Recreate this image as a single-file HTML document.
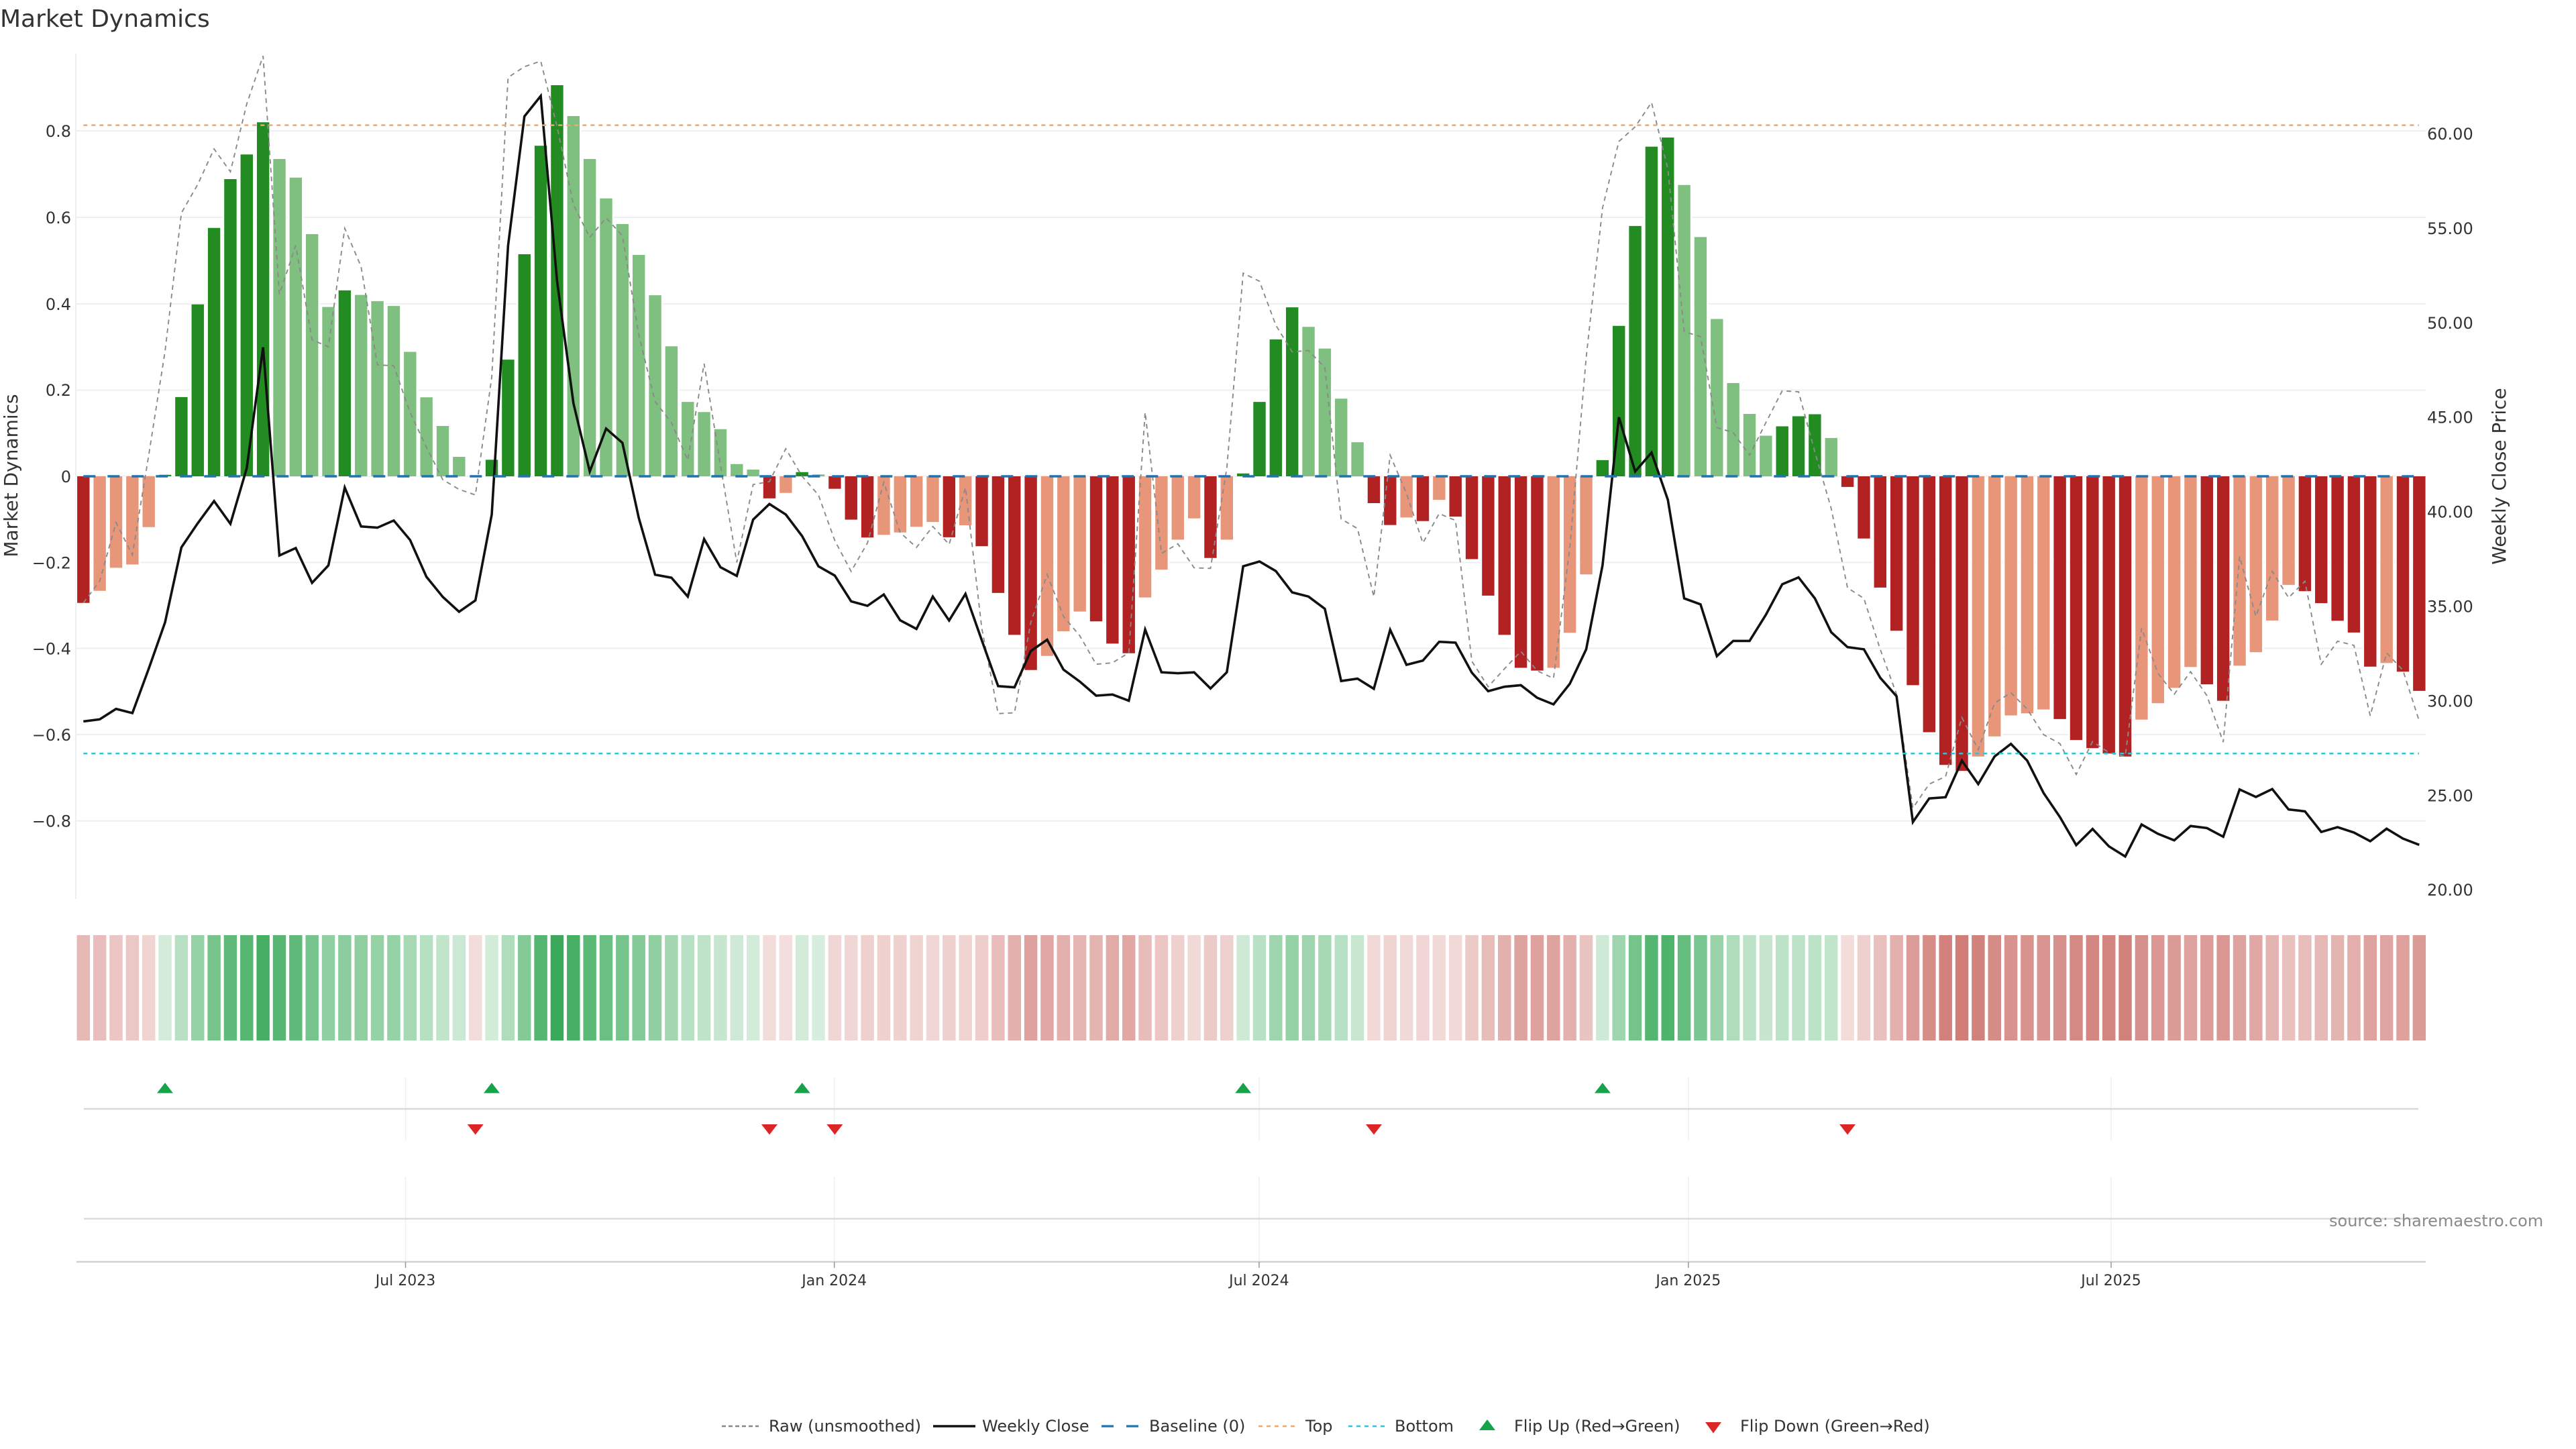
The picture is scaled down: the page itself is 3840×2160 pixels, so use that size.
<!DOCTYPE html>
<html><head><meta charset="utf-8"><title>Market Dynamics</title>
<style>html,body{margin:0;padding:0;background:#fff;width:3840px;height:2160px;overflow:hidden}svg{display:block}text{font-family:"DejaVu Sans","Liberation Sans",sans-serif;fill:#333}</style></head>
<body>
<svg width="3840" height="2160" viewBox="0 0 3840 2160" xmlns="http://www.w3.org/2000/svg">
<rect width="3840" height="2160" fill="#fff"/>
<text x="0" y="40" font-size="36">Market Dynamics</text>
<!-- grid -->
<g stroke="#eeeff3" stroke-width="2" fill="none">
<path d="M113 80V1340"/>
<path d="M113 195H3616M113 324H3616M113 453H3616M113 581.5H3616M113 710H3616M113 838.5H3616M113 966.5H3616M113 1095H3616M113 1223.7H3616"/>
</g>
<defs>
<path id="dg" d="M5 710V707.7M6 710V591.9M7 710V453.7M8 710V339.8M9 710V267M10 710V230.2M11 710V182.3M16 710V432.9M25 710V685.4M26 710V536.1M27 710V379M28 710V217.2M29 710V127M44 710V703.8M71 710V705.8M72 710V599.1M73 710V506M74 710V458.1M93 710V685.9M94 710V485.7M95 710V336.9M96 710V218.6M97 710V205M104 710V635.5M105 710V620.5M106 710V617.5"/>
<path id="lg" d="M12 710V237M13 710V264.7M14 710V349M15 710V457.6M17 710V439.6M18 710V448.9M19 710V456.1M20 710V524.5M21 710V592.3M22 710V635M23 710V681M30 710V173M31 710V237M32 710V295.7M33 710V334M34 710V380M35 710V440.1M36 710V516.2M37 710V599.1M38 710V614.2M39 710V639.8M40 710V691.7M41 710V700M45 710V707.2M75 710V487.2M76 710V519.6M77 710V594.3M78 710V659.2M98 710V275.8M99 710V353.4M100 710V475.5M101 710V571M102 710V617M103 710V649.5M107 710V652.9"/>
<path id="dr" d="M0 710V898.7M42 710V742.9M46 710V728.6M47 710V774.6M48 710V801.3M53 710V800.9M55 710V814.3M56 710V883.9M57 710V946.4M58 710V998.7M62 710V926.3M63 710V959.4M64 710V973.7M69 710V831.7M79 710V750M80 710V782.6M82 710V776.8M84 710V770.1M85 710V833.5M86 710V887.9M87 710V946.4M88 710V995.5M89 710V999.6M108 710V725.9M109 710V802.7M110 710V875.9M111 710V940.2M112 710V1021.4M113 710V1091.5M114 710V1140.2M115 710V1149.1M121 710V1071.9M122 710V1103.1M123 710V1115.2M124 710V1123.2M125 710V1127.7M130 710V1020.1M131 710V1044.6M136 710V881.3M137 710V899.1M138 710V925.4M139 710V942.9M140 710V993.8M142 710V1001.3M143 710V1029.9"/>
<path id="sa" d="M1 710V880.8M2 710V846.4M3 710V841.5M4 710V785.7M43 710V734.8M49 710V797.3M50 710V793.8M51 710V785.3M52 710V778.1M54 710V783M59 710V977.7M60 710V941M61 710V911.6M65 710V890.6M66 710V849.1M67 710V804.5M68 710V772.8M70 710V804.5M81 710V771.4M83 710V745.1M90 710V995.5M91 710V943.3M92 710V856.3M116 710V1127.7M117 710V1097.8M118 710V1066.5M119 710V1063.4M120 710V1057.6M126 710V1072.8M127 710V1048.2M128 710V1025.4M129 710V994.2M132 710V992.4M133 710V972.3M134 710V925M135 710V871.9M141 710V988.4"/>
</defs>
<g transform="translate(124.3 0) scale(24.35 1)" fill="none">
<g stroke="#fff" stroke-width=".96"><use href="#dg"/><use href="#lg"/><use href="#dr"/><use href="#sa"/></g>
<g stroke-width=".756">
<use href="#lg" stroke="#7fbf7f"/>
<use href="#sa" stroke="#e8967a"/>
<use href="#dg" stroke="#228b22"/>
<use href="#dr" stroke="#b22222"/>
</g>
<!-- raw -->
<polyline vector-effect="non-scaling-stroke" stroke="#8a8a8a" stroke-width="1.9" stroke-dasharray="7 6" points="0,898.7 1,866 2,779 3,827.2 4,678.6 5,523.5 6,317.5 7,275 8,222 9,256 10,155 11,83.4 12,438.7 13,366 14,506.5 15,517 16,340.3 17,397.5 18,543.9 19,545.3 20,615 21,666.5 22,715 23,729.5 24,737.8 25,562 26,115.4 27,99.4 28,91.1 29,189 30,305 31,353.9 32,324.8 33,351.4 34,499 35,598.6 36,630 37,686 38,542 39,693 40,838.4 41,722.3 42,717.9 43,668.9 44,710 45,737.9 46,805.8 47,851.8 48,809.4 49,718.8 50,793.8 51,816 52,784.8 53,811.6 54,726.8 55,936.6 56,1063.8 57,1062.5 58,927.7 59,856.3 60,918.8 61,947.8 62,990.2 63,988 64,973.2 65,614.6 66,825 67,810.7 68,846.4 69,847.3 70,698 71,407.2 72,419.3 73,484.7 74,524.5 75,522.5 76,547.8 77,773.7 78,787.9 79,889.7 80,678.6 81,735.7 82,809.4 83,765.6 84,775.9 85,985.7 86,1023.7 87,996.9 88,971 89,1000 90,1011.2 91,816 92,533 93,310 94,210.9 95,189 96,152.7 97,252 98,494.4 99,501.7 100,637.4 101,644.7 102,678.6 103,630 104,582.6 105,584 106,673.8 107,758 108,876.3 109,892 110,967.9 111,1034.8 112,1204.5 113,1168.8 114,1157.6 115,1069.6 116,1117.4 117,1048.2 118,1032.6 119,1057.1 120,1095.1 121,1108.5 122,1154.5 123,1105.4 124,1121.9 125,1127.7 126,936.6 127,1003.6 128,1034.8 129,1001.3 130,1037 131,1106.3 132,829.5 133,918.8 134,851.8 135,891 136,866.5 137,990.2 138,955.8 139,962 140,1067 141,973.2 142,999.1 143,1075"/>
<!-- close -->
<polyline vector-effect="non-scaling-stroke" stroke="#111" stroke-width="3.6" points="0,1075.4 1,1072.3 2,1056.7 3,1063 4,996.9 5,927.7 6,816 7,780 8,746.9 9,780.8 10,698 11,517.7 12,828 13,817 14,868.8 15,842.9 16,726.8 17,784.8 18,786.6 19,775.9 20,804.9 21,859.8 22,889.7 23,912 24,895 25,767 26,366 27,173.5 28,143 29,419.3 30,601 31,702.9 32,638.9 33,660.2 34,772 35,856.7 36,861.2 37,889.3 38,803.6 39,845.5 40,858.5 41,774.6 42,751.3 43,767 44,799.1 45,844.2 46,858 47,896.4 48,903.1 49,886.2 50,924.6 51,937.5 52,889.3 53,925 54,885.3 55,954.5 56,1022.8 57,1024.6 58,970.5 59,953.6 60,998.2 61,1016 62,1037 63,1035.3 64,1044.6 65,938.4 66,1002.2 67,1003.6 68,1002.2 69,1026.3 70,1002.2 71,844.2 72,837 73,851.3 74,883 75,889.3 76,907.6 77,1015.2 78,1011.6 79,1026.8 80,938.8 81,991 82,984.8 83,956.7 84,958 85,1002.7 86,1030.4 87,1023.7 88,1021.4 89,1040.2 90,1050 91,1019.2 92,967.9 93,842.9 94,621.9 95,702.9 96,674.7 97,745 98,892 99,900.9 100,978.1 101,955.4 102,955.4 103,916.5 104,871 105,860.7 106,892 107,942.4 108,964.7 109,967.9 110,1010.3 111,1037.9 112,1225.4 113,1190.2 114,1188.4 115,1133.9 116,1168.8 117,1127.7 118,1108.9 119,1133.9 120,1182.1 121,1217.9 122,1259.8 123,1235.7 124,1261.6 125,1276.8 126,1229 127,1242.9 128,1252.7 129,1231.3 130,1234.4 131,1247.3 132,1176.8 133,1188 134,1176.3 135,1206.7 136,1209.4 137,1240.2 138,1233 139,1241 140,1254 141,1235.3 142,1250 143,1259.4"/>
</g>
<!-- reference lines -->
<g fill="none">
<path d="M124.3 710H3606" stroke="#1f74b0" stroke-width="3.4" stroke-dasharray="18 18"/>
<path d="M124.3 186.6H3606" stroke="#f0a868" stroke-width="2.5" stroke-dasharray="6 6"/>
<path d="M124.3 1123.2H3606" stroke="#2cc5da" stroke-width="2.5" stroke-dasharray="6 6"/>
</g>
<!-- left ticks -->
<g font-size="24" text-anchor="end">
<text x="106" y="204">0.8</text><text x="106" y="333">0.6</text><text x="106" y="462">0.4</text><text x="106" y="590">0.2</text><text x="106" y="719">0</text><text x="106" y="847.5">−0.2</text><text x="106" y="975.5">−0.4</text><text x="106" y="1104">−0.6</text><text x="106" y="1232.7">−0.8</text>
</g>
<!-- right ticks -->
<g font-size="24">
<text x="3618" y="208">60.00</text><text x="3618" y="348.9">55.00</text><text x="3618" y="489.8">50.00</text><text x="3618" y="630.7">45.00</text><text x="3618" y="771.6">40.00</text><text x="3618" y="912.5">35.00</text><text x="3618" y="1053.4">30.00</text><text x="3618" y="1194.3">25.00</text><text x="3618" y="1335.2">20.00</text>
</g>
<text font-size="28" text-anchor="middle" transform="translate(26 709) rotate(-90)">Market Dynamics</text>
<text font-size="28" text-anchor="middle" transform="translate(3735 710) rotate(-90)">Weekly Close Price</text>
<!-- heat strip -->
<g transform="translate(124.3 0) scale(24.35 1)" fill="none" stroke-width=".8">
<g stroke="#b6332b">
<path stroke-opacity=".34" d="M0 1394V1551"/><path stroke-opacity=".32" d="M1 1394V1551"/><path stroke-opacity=".28" d="M2 1394V1551"/><path stroke-opacity=".27" d="M3 1394V1551"/><path stroke-opacity=".21" d="M4 1394V1551"/><path stroke-opacity=".17" d="M24 1394V1551"/><path stroke-opacity=".17" d="M42 1394V1551"/><path stroke-opacity=".16" d="M43 1394V1551"/><path stroke-opacity=".2" d="M46 1394V1551"/><path stroke-opacity=".2" d="M47 1394V1551"/><path stroke-opacity=".23" d="M48 1394V1551"/><path stroke-opacity=".22" d="M49 1394V1551"/><path stroke-opacity=".22" d="M50 1394V1551"/><path stroke-opacity=".21" d="M51 1394V1551"/><path stroke-opacity=".2" d="M52 1394V1551"/><path stroke-opacity=".23" d="M53 1394V1551"/><path stroke-opacity=".21" d="M54 1394V1551"/><path stroke-opacity=".24" d="M55 1394V1551"/><path stroke-opacity=".32" d="M56 1394V1551"/><path stroke-opacity=".39" d="M57 1394V1551"/><path stroke-opacity=".46" d="M58 1394V1551"/><path stroke-opacity=".43" d="M59 1394V1551"/><path stroke-opacity=".39" d="M60 1394V1551"/><path stroke-opacity=".36" d="M61 1394V1551"/><path stroke-opacity=".37" d="M62 1394V1551"/><path stroke-opacity=".41" d="M63 1394V1551"/><path stroke-opacity=".43" d="M64 1394V1551"/><path stroke-opacity=".33" d="M65 1394V1551"/><path stroke-opacity=".28" d="M66 1394V1551"/><path stroke-opacity=".23" d="M67 1394V1551"/><path stroke-opacity=".19" d="M68 1394V1551"/><path stroke-opacity=".26" d="M69 1394V1551"/><path stroke-opacity=".23" d="M70 1394V1551"/><path stroke-opacity=".19" d="M79 1394V1551"/><path stroke-opacity=".21" d="M80 1394V1551"/><path stroke-opacity=".19" d="M81 1394V1551"/><path stroke-opacity=".2" d="M82 1394V1551"/><path stroke-opacity=".18" d="M83 1394V1551"/><path stroke-opacity=".19" d="M84 1394V1551"/><path stroke-opacity=".26" d="M85 1394V1551"/><path stroke-opacity=".33" d="M86 1394V1551"/><path stroke-opacity=".39" d="M87 1394V1551"/><path stroke-opacity=".45" d="M88 1394V1551"/><path stroke-opacity=".46" d="M89 1394V1551"/><path stroke-opacity=".45" d="M90 1394V1551"/><path stroke-opacity=".39" d="M91 1394V1551"/><path stroke-opacity=".29" d="M92 1394V1551"/><path stroke-opacity=".17" d="M108 1394V1551"/><path stroke-opacity=".23" d="M109 1394V1551"/><path stroke-opacity=".31" d="M110 1394V1551"/><path stroke-opacity=".39" d="M111 1394V1551"/><path stroke-opacity=".48" d="M112 1394V1551"/><path stroke-opacity=".56" d="M113 1394V1551"/><path stroke-opacity=".62" d="M114 1394V1551"/><path stroke-opacity=".63" d="M115 1394V1551"/><path stroke-opacity=".61" d="M116 1394V1551"/><path stroke-opacity=".57" d="M117 1394V1551"/><path stroke-opacity=".53" d="M118 1394V1551"/><path stroke-opacity=".53" d="M119 1394V1551"/><path stroke-opacity=".52" d="M120 1394V1551"/><path stroke-opacity=".54" d="M121 1394V1551"/><path stroke-opacity=".58" d="M122 1394V1551"/><path stroke-opacity=".59" d="M123 1394V1551"/><path stroke-opacity=".6" d="M124 1394V1551"/><path stroke-opacity=".61" d="M125 1394V1551"/><path stroke-opacity=".54" d="M126 1394V1551"/><path stroke-opacity=".51" d="M127 1394V1551"/><path stroke-opacity=".49" d="M128 1394V1551"/><path stroke-opacity=".45" d="M129 1394V1551"/><path stroke-opacity=".48" d="M130 1394V1551"/><path stroke-opacity=".51" d="M131 1394V1551"/><path stroke-opacity=".45" d="M132 1394V1551"/><path stroke-opacity=".43" d="M133 1394V1551"/><path stroke-opacity=".37" d="M134 1394V1551"/><path stroke-opacity=".31" d="M135 1394V1551"/><path stroke-opacity=".32" d="M136 1394V1551"/><path stroke-opacity=".34" d="M137 1394V1551"/><path stroke-opacity=".37" d="M138 1394V1551"/><path stroke-opacity=".39" d="M139 1394V1551"/><path stroke-opacity=".45" d="M140 1394V1551"/><path stroke-opacity=".44" d="M141 1394V1551"/><path stroke-opacity=".46" d="M142 1394V1551"/><path stroke-opacity=".49" d="M143 1394V1551"/>
</g>
<g stroke="#22a046">
<path stroke-opacity=".2" d="M5 1394V1551"/><path stroke-opacity=".32" d="M6 1394V1551"/><path stroke-opacity=".48" d="M7 1394V1551"/><path stroke-opacity=".62" d="M8 1394V1551"/><path stroke-opacity=".72" d="M9 1394V1551"/><path stroke-opacity=".76" d="M10 1394V1551"/><path stroke-opacity=".84" d="M11 1394V1551"/><path stroke-opacity=".76" d="M12 1394V1551"/><path stroke-opacity=".72" d="M13 1394V1551"/><path stroke-opacity=".62" d="M14 1394V1551"/><path stroke-opacity=".5" d="M15 1394V1551"/><path stroke-opacity=".52" d="M16 1394V1551"/><path stroke-opacity=".5" d="M17 1394V1551"/><path stroke-opacity=".48" d="M18 1394V1551"/><path stroke-opacity=".48" d="M19 1394V1551"/><path stroke-opacity=".4" d="M20 1394V1551"/><path stroke-opacity=".33" d="M21 1394V1551"/><path stroke-opacity=".28" d="M22 1394V1551"/><path stroke-opacity=".24" d="M23 1394V1551"/><path stroke-opacity=".2" d="M25 1394V1551"/><path stroke-opacity=".36" d="M26 1394V1551"/><path stroke-opacity=".56" d="M27 1394V1551"/><path stroke-opacity=".77" d="M28 1394V1551"/><path stroke-opacity=".89" d="M29 1394V1551"/><path stroke-opacity=".83" d="M30 1394V1551"/><path stroke-opacity=".74" d="M31 1394V1551"/><path stroke-opacity=".67" d="M32 1394V1551"/><path stroke-opacity=".62" d="M33 1394V1551"/><path stroke-opacity=".56" d="M34 1394V1551"/><path stroke-opacity=".5" d="M35 1394V1551"/><path stroke-opacity=".42" d="M36 1394V1551"/><path stroke-opacity=".32" d="M37 1394V1551"/><path stroke-opacity=".29" d="M38 1394V1551"/><path stroke-opacity=".26" d="M39 1394V1551"/><path stroke-opacity=".22" d="M40 1394V1551"/><path stroke-opacity=".2" d="M41 1394V1551"/><path stroke-opacity=".2" d="M44 1394V1551"/><path stroke-opacity=".18" d="M45 1394V1551"/><path stroke-opacity=".22" d="M71 1394V1551"/><path stroke-opacity=".32" d="M72 1394V1551"/><path stroke-opacity=".44" d="M73 1394V1551"/><path stroke-opacity=".48" d="M74 1394V1551"/><path stroke-opacity=".44" d="M75 1394V1551"/><path stroke-opacity=".4" d="M76 1394V1551"/><path stroke-opacity=".32" d="M77 1394V1551"/><path stroke-opacity=".25" d="M78 1394V1551"/><path stroke-opacity=".22" d="M93 1394V1551"/><path stroke-opacity=".44" d="M94 1394V1551"/><path stroke-opacity=".62" d="M95 1394V1551"/><path stroke-opacity=".77" d="M96 1394V1551"/><path stroke-opacity=".8" d="M97 1394V1551"/><path stroke-opacity=".7" d="M98 1394V1551"/><path stroke-opacity=".6" d="M99 1394V1551"/><path stroke-opacity=".46" d="M100 1394V1551"/><path stroke-opacity=".36" d="M101 1394V1551"/><path stroke-opacity=".3" d="M102 1394V1551"/><path stroke-opacity=".26" d="M103 1394V1551"/><path stroke-opacity=".3" d="M104 1394V1551"/><path stroke-opacity=".3" d="M105 1394V1551"/><path stroke-opacity=".3" d="M106 1394V1551"/><path stroke-opacity=".28" d="M107 1394V1551"/>
</g>
</g>
<!-- vertical grids -->
<g stroke="#eeeff1" stroke-width="1.5" fill="none">
<path d="M604.5 1606V1700M1243.7 1606V1700M1876.9 1606V1700M2516.8 1606V1700M3147 1606V1700"/>
<path d="M604.5 1754V1881M1243.7 1754V1881M1876.9 1754V1881M2516.8 1754V1881M3147 1754V1881"/>
</g>
<g stroke="#d9d9d9" stroke-width="2.4" fill="none">
<path d="M125 1653H3605M125 1816.7H3605"/>
</g>
<path d="M114 1881H3616" stroke="#d0d0d0" stroke-width="2.4" fill="none"/>
<path d="M604.5 1881V1890M1243.7 1881V1890M1876.9 1881V1890M2516.8 1881V1890M3147 1881V1890" stroke="#999" stroke-width="1.5" fill="none"/>
<!-- markers -->
<g fill="#16a34a">
<polygon points="234,1629.5 246,1614 258,1629.5"/><polygon points="721,1629.5 733,1614 745,1629.5"/><polygon points="1183.7,1629.5 1195.7,1614 1207.7,1629.5"/><polygon points="1841.2,1629.5 1853.2,1614 1865.2,1629.5"/><polygon points="2376.9,1629.5 2388.9,1614 2400.9,1629.5"/>
</g>
<g fill="#dc2626">
<polygon points="696.7,1676 720.7,1676 708.7,1691.5"/><polygon points="1135,1676 1159,1676 1147,1691.5"/><polygon points="1232.4,1676 1256.4,1676 1244.4,1691.5"/><polygon points="2036,1676 2060,1676 2048,1691.5"/><polygon points="2742.1,1676 2766.1,1676 2754.1,1691.5"/>
</g>
<!-- x labels -->
<g font-size="22" text-anchor="middle">
<text x="604.5" y="1916">Jul 2023</text><text x="1243.7" y="1916">Jan 2024</text><text x="1876.9" y="1916">Jul 2024</text><text x="2516.8" y="1916">Jan 2025</text><text x="3147" y="1916">Jul 2025</text>
</g>
<text x="3472" y="1828" font-size="24" style="fill:#8a8a8a">source: sharemaestro.com</text>
<!-- legend -->
<g fill="none">
<path d="M1076 2126H1131" stroke="#888" stroke-width="2.5" stroke-dasharray="6 4"/>
<path d="M1391 2126H1454" stroke="#111" stroke-width="3.6"/>
<path d="M1642 2126H1698" stroke="#1f74b0" stroke-width="3.2" stroke-dasharray="18 19"/>
<path d="M1876 2126H1931" stroke="#f0a868" stroke-width="2.5" stroke-dasharray="6 6"/>
<path d="M2010 2126H2064" stroke="#2cc5da" stroke-width="2.5" stroke-dasharray="6 6"/>
</g>
<polygon points="2205,2132 2217,2116 2229,2132" fill="#16a34a"/>
<polygon points="2542,2120 2566,2120 2554,2136.5" fill="#dc2626"/>
<g font-size="24">
<text x="1146" y="2134">Raw (unsmoothed)</text>
<text x="1464" y="2134">Weekly Close</text>
<text x="1713" y="2134">Baseline (0)</text>
<text x="1946" y="2134">Top</text>
<text x="2079" y="2134">Bottom</text>
<text x="2257" y="2134">Flip Up (Red→Green)</text>
<text x="2594" y="2134">Flip Down (Green→Red)</text>
</g>
</svg>
</body></html>
